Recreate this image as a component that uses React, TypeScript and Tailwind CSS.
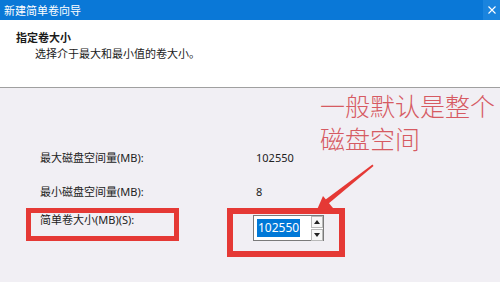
import React from 'react';

const font = "font-['Noto_Sans','Noto_Sans_CJK_SC',sans-serif]";

function SpinButton({ up }: { up?: boolean }) {
  return (
    <div className="w-[12px] h-[12px] border border-[#b9b9b9] bg-[#f7f7f7] flex items-center justify-center">
      <svg width="6" height="4" viewBox="0 0 6 4">
        {up ? <path d="M0 4 L3 0 L6 4 Z" fill="#222" /> : <path d="M0 0 L6 0 L3 4 Z" fill="#222" />}
      </svg>
    </div>
  );
}

export default function App() {
  return (
    <div className={`relative w-[500px] h-[282px] overflow-hidden bg-[#f1eff4] text-[#1a1a1a] ${font}`}>
      {/* Title bar */}
      <div className="h-5 bg-[#0a78d7] flex items-center justify-between">
        <span className="pl-1 text-[11px] leading-none text-white">新建简单卷向导</span>
        <div className="w-[17px] h-5 bg-[#1a84de] flex items-center justify-center">
          <svg width="8" height="8" viewBox="0 0 8 8">
            <path d="M0.5 0.5 L7.5 7.5 M7.5 0.5 L0.5 7.5" stroke="#fff" strokeWidth="1.1" />
          </svg>
        </div>
      </div>

      {/* Header */}
      <div className="h-[68px] bg-white border-b border-[#a0a0a0] pt-[10px] pl-4">
        <div className="text-[11px] leading-[16px] font-bold">指定卷大小</div>
        <div className="pl-[19px] text-[11px] leading-[16px]">选择介于最大和最小值的卷大小。</div>
      </div>

      {/* Content */}
      <div className="pl-[26px] pt-[63px] text-[11px] leading-[14px] text-[#222]">
        <div className="flex pl-[14px]">
          <span className="w-[216px]">最大磁盘空间量(MB):</span>
          <span>102550</span>
        </div>
        <div className="flex pl-[14px] mt-5">
          <span className="w-[216px]">最小磁盘空间量(MB):</span>
          <span>8</span>
        </div>
        <div className="flex items-start mt-[9px]">
          <div className="w-[153px] h-[33px] border-[5px] border-[#e53935] pl-[9px]">
            简单卷大小(MB)(S):
          </div>
          <div className="ml-[48px] w-[118px] h-[49px] border-[6px] border-[#e53935] pl-[20px] pt-[1px]">
            <div className="flex items-center w-[71px] h-[26px] bg-white border border-[#7a7a7a]">
              <div className="pl-[3px] w-[57px]">
                <span className="bg-[#0078d7] text-white text-[12px] leading-[18px] inline-block px-[1px]">102550</span>
              </div>
              <div className="flex flex-col gap-[1px]">
                <SpinButton up />
                <SpinButton />
              </div>
            </div>
          </div>
        </div>
      </div>

      {/* Annotation */}
      <div className="absolute left-[320px] top-[89px] text-[25px] leading-[33px] font-light text-[#d65a62] font-['Noto_Sans_CJK_SC',sans-serif]">
        <div>一般默认是整个</div>
        <div>磁盘空间</div>
      </div>
      <svg className="absolute left-0 top-0 pointer-events-none" width="500" height="282" viewBox="0 0 500 282">
        <polygon points="372.5,164.5 373.5,166 328,204 325,200" fill="#e53935" />
        <polygon points="316,212 323,196 333,208" fill="#e53935" />
      </svg>
    </div>
  );
}
